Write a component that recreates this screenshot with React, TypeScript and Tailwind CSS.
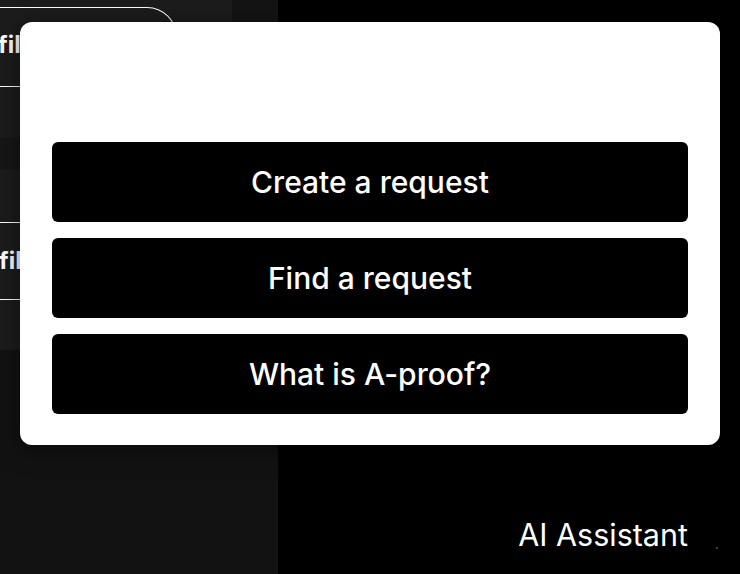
import { ReactNode } from "react";

const rowText = "text-[24px] font-bold text-white leading-none -ml-px";

function Row({ children, className }: { children?: ReactNode; className?: string }) {
  return <div className={`flex items-center ${className ?? ""}`}>{children}</div>;
}

export default function App() {
  const actions = ["Create a request", "Find a request", "What is A-proof?"];

  return (
    <div
      className="relative w-[740px] h-[574px] overflow-hidden bg-black flex"
      style={{ fontFamily: "Inter, 'Noto Sans', sans-serif" }}
    >
      {/* Left list panel, partly hidden behind the dialog */}
      <aside className="w-[278px] h-full flex flex-col bg-[#121212]">
        <div className="flex h-[350px]">
          <div className="w-[232px] bg-[#1c1c1c] flex flex-col pt-[7px]">
            <div className="h-[80px] border-t border-r border-b border-white rounded-tr-[30px] w-[178px] -ml-px flex items-center pb-[4px]">
              <span className={rowText}>file</span>
            </div>
            <Row className="h-[51px]" />
            <Row className="h-[32px] bg-[#161616]" />
            <Row className="h-[52px]" />
            <div className="h-[78px] border-t border-b border-white flex items-center">
              <span className={rowText}>file</span>
            </div>
            <Row className="flex-1" />
          </div>
          <div className="flex-1 bg-[#141414]" />
        </div>
        <div className="flex-1" />
      </aside>

      {/* Right area */}
      <main className="flex-1 flex flex-col justify-end items-end pr-[52px] pb-[24px]">
        <span className="text-[30.5px] text-white leading-none">AI Assistant</span>
      </main>
      <div className="absolute left-[716px] top-[547px] w-[2px] h-[2px] rounded-full bg-[#555]" />

      {/* Modal */}
      <div className="absolute left-[20px] top-[22px] w-[700px] bg-white rounded-[12px] px-[32px] pt-[120px] pb-[31px] flex flex-col gap-[16px] shadow-[0_4px_24px_rgba(0,0,0,0.5)]">
        {actions.map((label) => (
          <button
            key={label}
            className="h-[80px] shrink-0 w-full bg-black rounded-[6px] text-white text-[30px] font-medium leading-none flex items-center justify-center"
          >
            {label}
          </button>
        ))}
      </div>
    </div>
  );
}
